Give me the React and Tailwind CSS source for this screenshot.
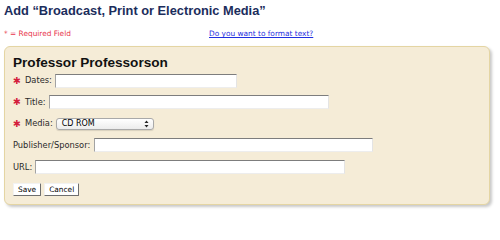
import React from 'react';

const Star = () => (
  <span className="text-[#d4203c] text-[9.5px] font-bold mr-[4px] leading-none">✱</span>
);

const TextBox = ({ width }) => (
  <div
    className="h-[14px] bg-white border border-t-[#7d7d7d] border-l-[#a3a3a3] border-r-[#e4e4e4] border-b-[#ededed]"
    style={{ width }}
  />
);

const Button = ({ children }) => (
  <button className="h-[13px] px-[4px] bg-white text-black text-[7.4px] leading-none border border-t-[#f2f2f2] border-l-[#f2f2f2] border-r-[#6e6e6e] border-b-[#6e6e6e] rounded-[1px]">
    {children}
  </button>
);

export default function App() {
  return (
    <div className="w-[500px] h-[214px] bg-white font-['DejaVu_Sans',sans-serif] text-[#1e1e1e]">
      <h1 className="pl-[4px] pt-[2px] h-[18px] leading-[17px] text-[12.8px] font-bold text-[#1b2d5c] font-['Liberation_Sans',Arial,sans-serif]">
        Add “Broadcast, Print or Electronic Media”
      </h1>
      <div className="flex items-center pl-[4px] mt-[10px] h-[12px] text-[7.4px] leading-none">
        <span className="w-[205px] text-[#e8354b]">* = Required Field</span>
        <a href="#" className="text-[#1f2fe0] underline">Do you want to format text?</a>
      </div>
      <div className="ml-[4px] mt-[6px] w-[486px] h-[159px] bg-[#f5ecd7] border-[1.5px] border-[#e4d5a3] rounded-[6px] shadow-[2px_2px_3px_rgba(0,0,0,0.22)] px-[8px] pt-[8px]">
        <h2 className="h-[16px] leading-[16px] text-[13.6px] font-bold text-[#111] font-['Liberation_Sans',Arial,sans-serif]">
          Professor Professorson
        </h2>
        <div className="flex flex-col gap-[7.6px] mt-[2.5px] text-[8.3px] text-[#2a2a2a]">
          <div className="flex items-center h-[14px]">
            <Star />
            <span className="mr-[3px]">Dates:</span>
            <TextBox width={182} />
          </div>
          <div className="flex items-center h-[14px]">
            <Star />
            <span className="mr-[3px]">Title:</span>
            <TextBox width={280} />
          </div>
          <div className="flex items-center h-[14px]">
            <Star />
            <span className="mr-[3px]">Media:</span>
            <div className="w-[98px] h-[12px] flex items-center justify-between pl-[5px] pr-[4px] bg-gradient-to-b from-white to-[#ececec] border border-[#a9a9a9] rounded-[3px] shadow-[0_1px_1px_rgba(0,0,0,0.12)] text-[8px] text-black">
              <span>CD ROM</span>
              <svg width="5" height="8" viewBox="0 0 5 8">
                <path d="M2.5 0.5 L4.5 3 L0.5 3 Z" fill="#222" />
                <path d="M0.5 5 L4.5 5 L2.5 7.5 Z" fill="#222" />
              </svg>
            </div>
          </div>
          <div className="flex items-center h-[14px]">
            <span className="mr-[4px]">Publisher/Sponsor:</span>
            <TextBox width={279} />
          </div>
          <div className="flex items-center h-[14px]">
            <span className="mr-[3px]">URL:</span>
            <TextBox width={310} />
          </div>
          <div className="flex items-center gap-[3px] h-[14px] mt-[1px]">
            <Button>Save</Button>
            <Button>Cancel</Button>
          </div>
        </div>
      </div>
    </div>
  );
}
